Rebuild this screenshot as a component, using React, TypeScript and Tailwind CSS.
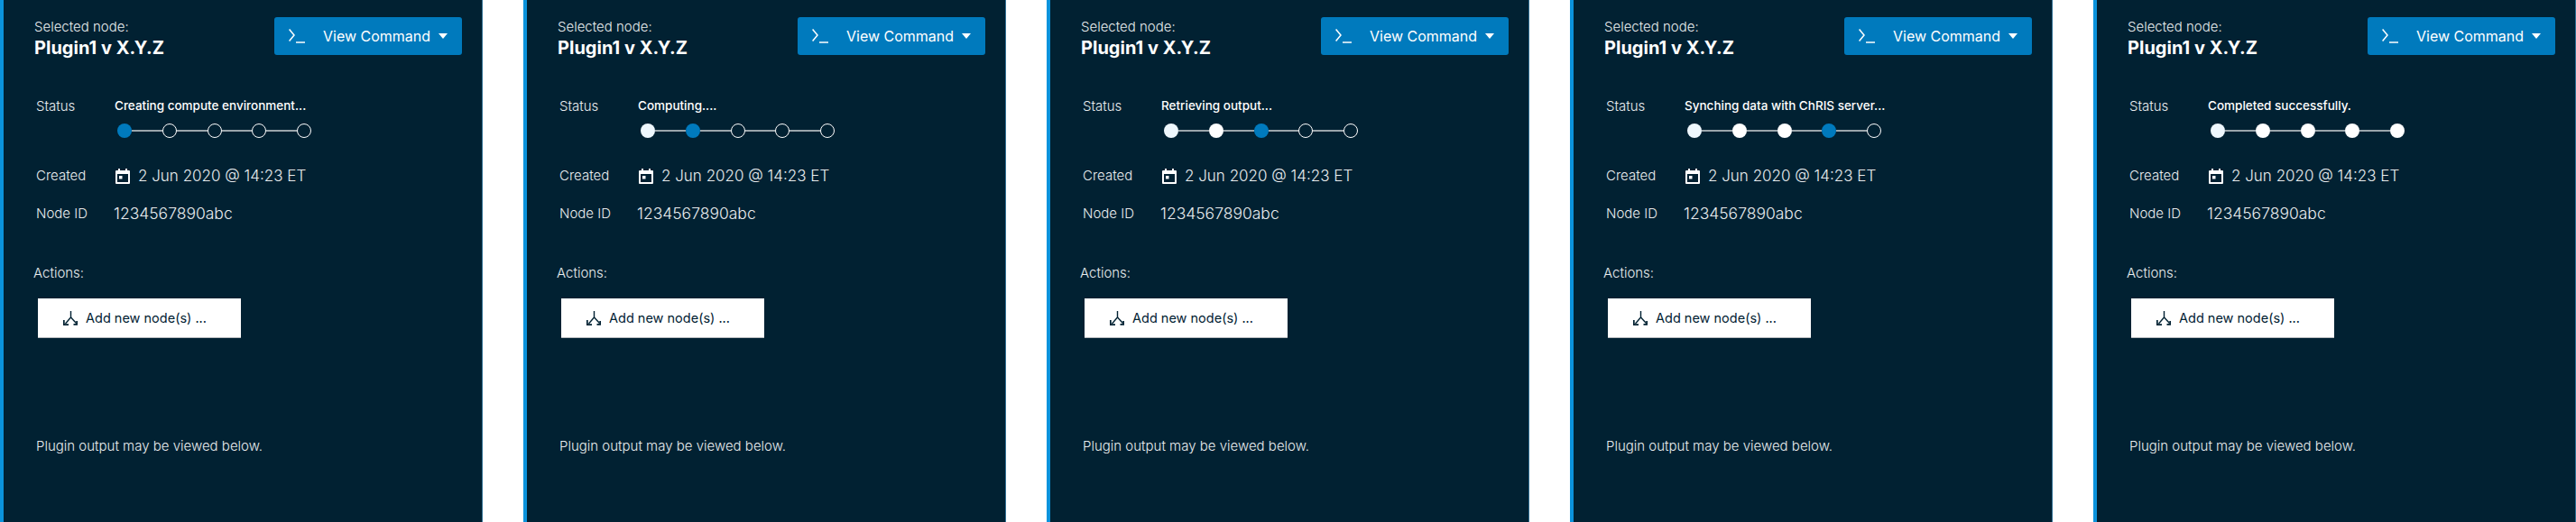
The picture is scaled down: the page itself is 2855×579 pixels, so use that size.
const steps = [
  { label: "Creating compute environment...", active: 0 },
  { label: "Computing....", active: 1 },
  { label: "Retrieving output...", active: 2 },
  { label: "Synching data with ChRIS server...", active: 3 },
  { label: "Completed successfully.", active: 5 },
];

function TerminalIcon() {
  return (
    <svg width="18" height="16" viewBox="0 0 18 16" fill="none" stroke="white" strokeWidth="1.5">
      <path d="M0.6 0.5 L6 7 L0.6 13.5" />
      <path d="M8 15 H18" />
    </svg>
  );
}

function CalendarIcon() {
  return (
    <svg width="16" height="17" viewBox="0 0 16 17" fill="white">
      <path d="M3 0h2v2h6V0h2v2h2a1 1 0 0 1 1 1v13a1 1 0 0 1-1 1H1a1 1 0 0 1-1-1V3a1 1 0 0 1 1-1h2V0zM2 6v9h12V6H2z" />
      <rect x="4" y="8" width="3.5" height="3.5" />
    </svg>
  );
}

function AddNodeIcon() {
  return (
    <svg width="16" height="16" viewBox="0 0 16 16" fill="none" stroke="#012132" strokeWidth="1.4">
      <path d="M8.5 0 V7 L2.5 14" />
      <path d="M8.5 7 L14.5 13.5" />
      <path d="M0.8 10 V15.2 H6" strokeWidth="1.8" />
      <path d="M15.2 11 V14.8 H11.5" strokeWidth="1.8" />
    </svg>
  );
}

function Stepper({ active }: { active: number }) {
  return (
    <div className="flex w-[215px] items-center">
      {[0, 1, 2, 3, 4].map((i) => (
        <div key={i} className={i === 0 ? "flex items-center" : "flex flex-1 items-center"}>
          {i > 0 && <div className="h-[2px] flex-1 bg-[#9aa5ab]" />}
          {i === active ? (
            <div className="h-[16px] w-[16px] rounded-full bg-[#007abd]" />
          ) : i < active ? (
            <div className={i === 0 ? "h-[16px] w-[16px] rounded-full bg-[#eef7fd]" : "h-[16px] w-[16px] rounded-full bg-white"} />
          ) : (
            <div className="h-[16px] w-[16px] rounded-full border-[1.5px] border-white" />
          )}
        </div>
      ))}
    </div>
  );
}

function Panel({ label, active }: { label: string; active: number }) {
  return (
    <div className="flex h-[579px] w-[535px] shrink-0 flex-col border-l-4 border-r border-l-[#0b93dc] border-r-[#2f6f93] bg-[#012132] font-['Inter',sans-serif] font-light text-[#e8ecee]">
      <div className="mt-[19px] flex items-start justify-between pl-[34px] pr-[22px]">
        <div className="pt-[1px]">
          <div className="text-[15px] leading-[20px]">Selected node:</div>
          <div className="text-[20px] leading-[26px] font-bold text-white">Plugin1 v X.Y.Z</div>
        </div>
        <div className="flex h-[42px] w-[208px] items-center rounded-[3px] bg-[#007abd] pl-[16px] pr-[16px] text-white">
          <TerminalIcon />
          <span className="ml-[20px] flex-1 text-[16px] font-normal">View Command</span>
          <div className="h-0 w-0 border-x-[5px] border-t-[6px] border-x-transparent border-t-white" />
        </div>
      </div>

      <div className="mt-[41px] flex pl-[36px]">
        <div className="w-[87px] pt-[1px] text-[15px] leading-[20px]">Status</div>
        <div>
          <div className="text-[13.5px] leading-[20px] font-medium text-white">{label}</div>
          <div className="ml-[3px] mt-[10px]">
            <Stepper active={active} />
          </div>
        </div>
      </div>

      <div className="mt-[29px] flex items-center pl-[36px]">
        <div className="w-[88px] text-[15px] leading-[26px]">Created</div>
        <CalendarIcon />
        <span className="ml-[9px] text-[17px] leading-[26px]">2 Jun 2020 @ 14:23 ET</span>
      </div>

      <div className="mt-[16px] flex items-center pl-[36px]">
        <div className="w-[86px] text-[15px] leading-[26px]">Node ID</div>
        <span className="text-[17.5px] leading-[26px]">1234567890abc</span>
      </div>

      <div className="mt-[43px] pl-[33px] text-[15px] leading-[20px]">Actions:</div>

      <div className="ml-[38px] mt-[18px] flex h-[44px] w-[225px] items-center gap-[9px] border-b border-b-[#b8bbbe] bg-white pl-[28px] text-[14.5px] font-normal text-[#012132]">
        <AddNodeIcon />
        <span>Add new node(s) ...</span>
      </div>

      <div className="mt-[110px] pl-[36px] text-[15px] leading-[20px]">Plugin output may be viewed below.</div>
    </div>
  );
}

export default function App() {
  return (
    <main className="flex h-[579px] w-[2855px] gap-[45px] overflow-hidden bg-white">
      {steps.map((s) => (
        <Panel key={s.label} label={s.label} active={s.active} />
      ))}
    </main>
  );
}
